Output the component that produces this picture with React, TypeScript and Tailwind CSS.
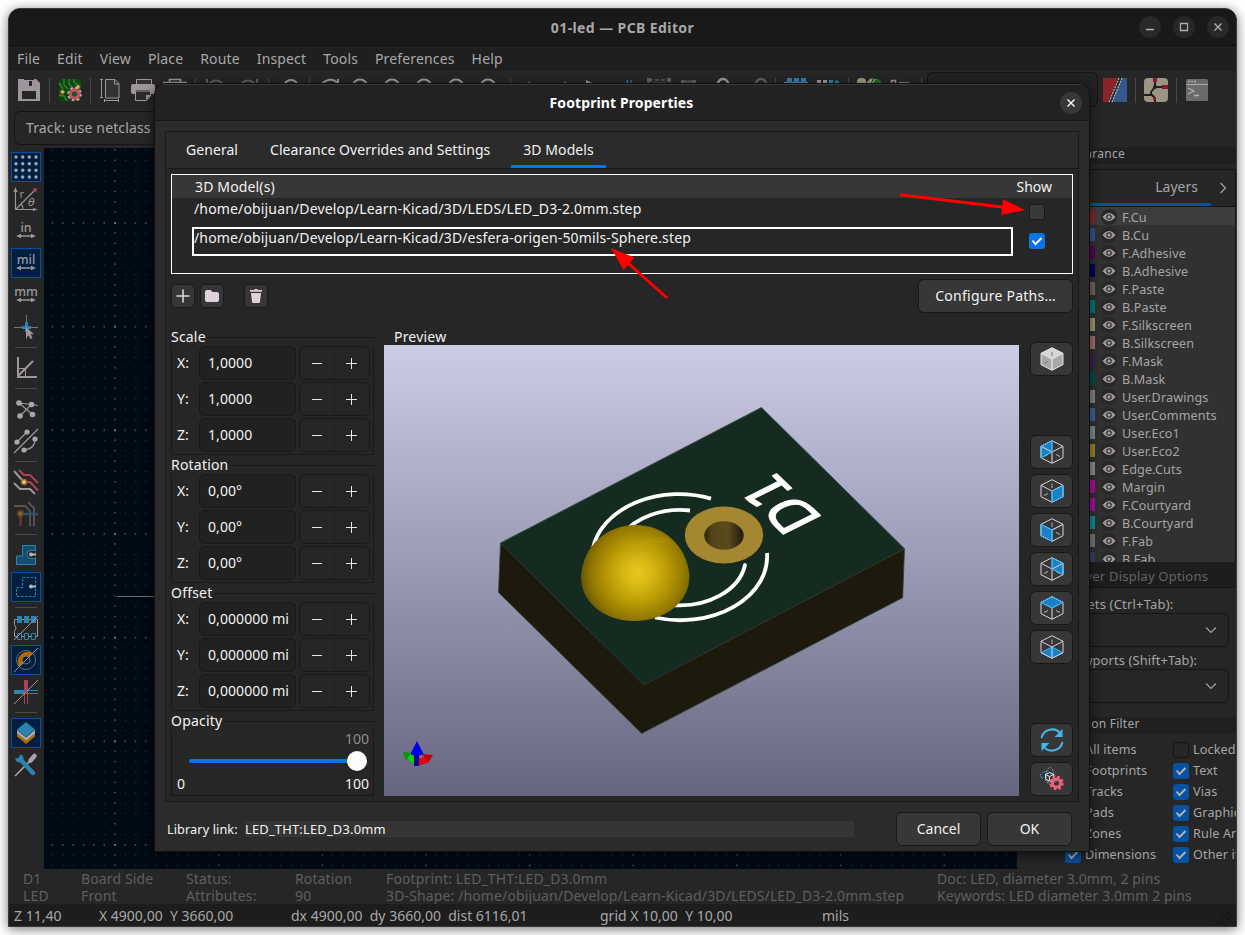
import React from "react";

type Kids = { children?: React.ReactNode };

const Ic = ({ children, dim }: Kids & { dim?: boolean }) => (
  <svg width="24" height="24" viewBox="0 0 24 24" fill="none" className={dim ? "shrink-0 overflow-visible opacity-50" : "shrink-0 overflow-visible"}>
    {children}
  </svg>
);

const G = "#9d969c";
const B = "#2c83ae";
const R = "#ad4157";
const O = "#b06a00";

const TB = ({ children, dim }: Kids & { dim?: boolean }) => (
  <div className="flex h-8 w-8 shrink-0 items-center justify-center">
    <Ic dim={dim}>{children}</Ic>
  </div>
);

const TSep = () => (
  <div className="flex h-8 w-[9px] shrink-0 items-center justify-center">
    <div className="h-[25px] w-px bg-[#484848]" />
  </div>
);

const LB = ({ children, on, dim }: Kids & { on?: boolean; dim?: boolean }) => (
  <div className="flex h-8 w-full shrink-0 items-center justify-center">
    <div
      className={
        on
          ? "flex h-[30px] w-[30px] items-center justify-center border border-[#0552a3] bg-[#001f40]"
          : "flex h-[30px] w-[30px] items-center justify-center"
      }
    >
      <Ic dim={dim}>{children}</Ic>
    </div>
  </div>
);

const LSep = () => (
  <div className="flex h-[9px] w-full shrink-0 items-center justify-center">
    <div className="h-px w-[22px] bg-[#4a4a4a]" />
  </div>
);

const Unit = ({ t }: { t: string }) => (
  <>
    <text x="12" y="12.500" textAnchor="middle" fontSize="12.500" fontFamily="Noto Sans, sans-serif" fontWeight="500" fill={G}>
      {t}
    </text>
    <path d="M4 17h16" stroke={G} strokeWidth="1.500" />
    <path d="M2 17l5-2.200v4.400zM22 17l-5-2.200v4.400z" fill={G} />
  </>
);

function TopToolbar() {
  return (
    <div className="flex h-[38px] shrink-0 items-center pl-1">
      <TB>
        <path fillRule="evenodd" fill={G} d="M1 1h18l4 4v18H1zM7 1v8h10V1zM5 13v8h14v-8z" />
        <path d="M7 2h10v7H7z" fill={G} />
        <path d="M12 3h3v5h-3z" fill="#262626" />
      </TB>
      <TSep />
      <TB>
        <rect x="1" y="1" width="22" height="22" rx="3" fill="#0a4a0e" />
        <path d="M6 1v6l4 4M11 1v5l4 4M16 1v3l4 3M1 17l5 1 3 5M1 5l4 6" stroke="#3f7a3f" strokeWidth="1.4" />
        <circle cx="4.5" cy="14" r="1.9" fill="#c5b59b" stroke={O} />
        <circle cx="20" cy="9" r="1.9" fill="#c5b59b" stroke={O} />
        <circle cx="20" cy="21" r="1.7" fill={O} />
        <circle cx="16.5" cy="16" r="4.2" stroke="#bd5266" strokeWidth="3.4" />
        <circle cx="16.5" cy="16" r="6.4" stroke="#c9a0a8" strokeWidth="1.8" strokeDasharray="2.6 2.4" />
        <circle cx="16.5" cy="16" r="2" fill="#1d5a22" />
      </TB>
      <TSep />
      <TB>
        <path d="M6.500 1.500h9.500l4 4v14.500H6.500z" stroke={G} fill="#333" />
        <path d="M15.500 1.500v4.500h4.500" stroke={G} />
        <path d="M2.500 1v19M1 1.500h3M1 19.500h3M5 22.500h15M5.500 21v3M19.500 21v3" stroke={G} />
      </TB>
      <TB>
        <path d="M5.500 6V1.500h15V6" stroke={G} fill="#333" />
        <path d="M2 6h20q2 0 2 2v6q0 2-2 2h-2l-2-4H5v4H2q-2 0-2-2V8q0-2 2-2z" fill={G} />
        <path d="M4.500 13h15v5l-4 4.500h-11z" stroke={G} fill="#2c2c2c" />
        <path d="M15 17h5l-5 5z" fill={G} />
      </TB>
      <TB>
        <path d="M0 4.500h24M6.500 4V1.500h11V4" stroke={G} strokeWidth="1.6" />
      </TB>
      <TSep />
      <TB dim>
        <path d="M3 1v8h7M4 7q5-6 11-4q5 2 5 8" stroke={G} strokeWidth="2" />
      </TB>
      <TB dim>
        <path d="M21 1v8h-7M20 7q-5-6-11-4q-5 2-5 8" stroke={G} strokeWidth="2" />
      </TB>
      <TSep />
      <TB>
        <circle cx="14" cy="9" r="7" stroke={G} strokeWidth="2" />
      </TB>
      <TSep />
      <TB>
        <path d="M3 9a9.500 9.500 0 0 1 17-3V1" stroke={G} strokeWidth="2" />
      </TB>
      {[0, 1, 2, 3, 4].map((i) => (
        <TB key={i}>
          <circle cx="10" cy="9" r="7.500" stroke={G} strokeWidth="2" />
        </TB>
      ))}
      <TSep />
      <TB>
        <path d="M7 6l4-3v4z" fill={B} />
      </TB>
      <TB>
        <path d="M17 6l-4-3v4z" fill={B} />
      </TB>
      <TB>
        <path d="M3 2l12 6H3z" fill={G} />
      </TB>
      <TB>
        <path d="M11.500 6l1-4v8zM16 2v8" fill={B} stroke={B} />
      </TB>
      <TB dim>
        <path d="M2 2h20v16H2z" stroke={G} strokeDasharray="4 2" strokeWidth="1.500" />
        <path d="M0 0h4v4H0zM20 0h4v4h-4z" fill={G} />
        <path d="M6 5h12v8H6z" stroke={G} />
      </TB>
      <TB dim>
        <path d="M4 3.500h12" stroke={G} strokeWidth="2" />
        <path d="M2 2h4v4H2zM13 2h4v4h-4z" fill={G} />
      </TB>
      <TB>
        <path d="M7 12V6a5 5 0 0 1 10 0v6" stroke={G} strokeWidth="2.400" />
      </TB>
      <TB dim>
        <path d="M13 12V6a5 5 0 0 1 10 0v3" stroke={G} strokeWidth="2.400" />
      </TB>
      <TSep />
      <TB>
        <path d="M0.500 4.500h23v14H.5z" stroke={G} />
        <path d="M3 0h5v7H3zM10 0h5v7h-5zM17 0h5v7h-5z" fill={B} />
      </TB>
      <TB>
        <path d="M1 2h4v4H1zM7 2h4v4H7z" fill={G} />
        <path d="M13 2h4v4h-4zM20 2q4 1 3 4h-5z" fill={B} />
      </TB>
      <TSep />
      <TB>
        <path d="M0 8V3q0-3 5-3t4 6zM9 6q3-6 7-6l-3 8z" fill="#a09983" />
        <path d="M16 1q8-2 9 6h-9z" fill="#1e6a22" />
        <path d="M14 7l4-6" stroke="#c8c8c8" />
      </TB>
      <TB>
        <path d="M2.500 2.500h4v6h-4zM10 5h10" stroke={G} strokeWidth="1.500" />
      </TB>
      <TSep />
      <div className="mt-[-1px] ml-px h-[35px] w-[171px] shrink-0 rounded-md border border-[#141414] bg-[#222]" />
      <div className="w-px shrink-0" />
      <TB>
        <path d="M0 0h15L5 24H0z" fill="#8c2427" />
        <path d="M19 0h5v24H9z" fill="#34588f" />
        <path d="M16 0L6 24M19 0L9 24" stroke="#b9b9b9" strokeWidth="1.200" strokeDasharray="2 1" />
      </TB>
      <TSep />
      <TB>
        <rect width="24" height="24" rx="4" fill="#9a9482" />
        <path d="M11 4v5l7 0M11 9l-4 5v3H0M7 16l4 4v4" stroke="#1f1f1f" strokeWidth="2" />
        <circle cx="11" cy="9" r="2" fill="#1f1f1f" />
        <path d="M9 0h4v4H9zM18 7h6v4h-6zM9 19h3v3H9z" fill="#8c1530" />
      </TB>
      <TSep />
      <TB>
        <rect x="1" y="1" width="22" height="22" rx="1.500" fill="#6b6b6b" />
        <path d="M1 6.500h22" stroke="#aaa" />
        <path d="M3 3.500h9" stroke="#aaa" strokeDasharray="2 1" strokeWidth="1.500" />
        <path d="M3 10l6 3-6 3M9 17.500h5" stroke="#b2b2b2" strokeWidth="1.300" />
      </TB>
    </div>
  );
}

function LeftToolbar() {
  const dots = [2, 8.700, 15.300, 22];
  return (
    <div className="flex w-[35px] shrink-0 flex-col pt-[4px] pr-px">
      <LB on>
        {dots.map((x) => dots.map((y) => <circle key={x + "-" + y} cx={x} cy={y} r="1.700" fill="#a7a3a9" />))}
      </LB>
      <LB>
        <path d="M1.500 4v18.500H21M2 22L20 4M7 17q2 2 2 5" stroke={G} strokeWidth="1.100" />
        <path d="M1.500 0l2 5h-4zM24 22.500l-5-1.500v3z" fill={G} />
        <circle cx="21" cy="3" r="2" fill={R} />
        <text x="5.500" y="11" fontSize="11" fontFamily="Noto Sans, sans-serif" fill={G}>r</text>
        <text x="14" y="19" fontSize="11" fontStyle="italic" fontFamily="DejaVu Sans, sans-serif" fill={G}>θ</text>
      </LB>
      <LB><Unit t="in" /></LB>
      <LB on><Unit t="mil" /></LB>
      <LB><Unit t="mm" /></LB>
      <LB>
        <path d="M12.500 0v24M0 12.500h24" stroke="#777" />
        <path d="M12.500 7v10M8 12.500h9" stroke={B} strokeWidth="3" />
        <path d="M12 12v11l2.500-2.500L16.500 24l2-1-1.800-3.700H20z" fill={G} />
      </LB>
      <LSep />
      <LB>
        <path d="M4 1v20H23M4 20L19 5" stroke={G} strokeWidth="2" />
        <path d="M4 12.500h7.500v8" stroke={G} />
      </LB>
      <LSep />
      <LB>
        <path d="M5 6l13 1.500 6 1M5 6l14 12M18 7L6 19" stroke={G} strokeWidth="1.200" />
        <g fill="#aaa6ab">
          <circle cx="5" cy="6" r="2.800" /><circle cx="17.500" cy="7.500" r="2.800" />
          <circle cx="6" cy="19" r="2.800" /><circle cx="18.500" cy="17.500" r="2.800" />
        </g>
      </LB>
      <LB>
        <path d="M0 24L24 0M3 13L13 3M21 10q0 10-11 11" stroke={G} strokeWidth="1.200" />
        <g fill="#aaa6ab">
          <circle cx="3" cy="13" r="2.600" /><circle cx="13" cy="3" r="2.600" />
          <circle cx="21" cy="10" r="2.600" /><circle cx="10" cy="21" r="2.600" />
        </g>
      </LB>
      <LSep />
      <LB>
        <path d="M0 1l9 10M0 13l6 6h10l5 5" stroke={G} strokeWidth="2" />
        <path d="M5 0l5 5h6l8 8M10 12h6l8 8.500" stroke={R} strokeWidth="2" />
        <circle cx="10" cy="12" r="2.500" fill="#d9d5d0" stroke={O} strokeWidth="1.700" />
      </LB>
      <LB dim>
        <path d="M0 4h11l5 5v15M14 0l6 6v18" stroke="#888" strokeWidth="1.800" />
        <path d="M8 12h16" stroke={B} strokeWidth="2.400" /><path d="M6.500 12v12" stroke={R} strokeWidth="2.400" />
        <circle cx="6.500" cy="11.500" r="2.500" fill="#ccc" stroke={O} strokeWidth="2" />
      </LB>
      <LSep />
      <LB>
        <path d="M8.500 2.500h13v19h-19v-8.500h6z" fill="#144f72" stroke={B} />
        <path d="M21.500 7.500h-4.500a4 4 0 0 0 0 8h4.500" fill="#222" stroke={B} />
        <path d="M16 11.500h6" stroke="#bcb6bb" strokeWidth="2" /><circle cx="17" cy="11.500" r="2" fill="#bcb6bb" />
      </LB>
      <LB on>
        <path d="M8.500 2.500h13v19h-19v-9h6z" stroke={B} strokeWidth="1.200" strokeDasharray="2.500 1.500" />
        <path d="M16 11.500h6" stroke="#bcb6bb" strokeWidth="2" /><circle cx="17" cy="11.500" r="2" fill="#bcb6bb" />
      </LB>
      <LSep />
      <LB>
        <path d="M.5 3.500h23v17H.5v-5q3-3.500 0-7z" stroke={G} />
        <path d="M3 0h5v7H3zM10 0h5v7h-5zM17 0h5v7h-5z" fill={B} />
        <path d="M3.500 17.500h4v6h-4zM10.500 17.500h4v6h-4zM17.500 17.500h4v6h-4z" stroke={B} fill="#262626" />
        <path d="M0 24L24 0" stroke={G} />
      </LB>
      <LB on>
        <circle cx="12" cy="12" r="9.500" stroke="#62666d" /><circle cx="12" cy="12" r="4" stroke="#62666d" />
        <path d="M5.500 18.500A9.500 9.500 0 0 1 18.500 5.500L15 9a4 4 0 0 0-6 6z" fill={O} stroke={O} />
        <path d="M0 24L24 0" stroke={G} />
      </LB>
      <LB>
        <path d="M0 12h12" stroke={B} strokeWidth="4" /><path d="M12 10.500h12M12 13.500h12" stroke={B} />
        <path d="M12 0v12" stroke={R} strokeWidth="4" /><path d="M10.500 12v12M13.500 12v12" stroke={R} />
        <path d="M0 24L24 0" stroke={G} />
      </LB>
      <LSep />
      <LB on>
        <path d="M3 12.500l9 6.500 9-6.500v3l-9 7.500-9-7.500z" fill={O} />
        <path d="M3 9l9 7.500L21 9v3.500L12 19.500l-9-7z" fill="#b1a9b0" />
        <path d="M12 1l9 7.500-9 7.500-9-7.500z" fill={B} />
      </LB>
      <LB>
        <path d="M1 23L16 8" stroke="#aaa4aa" strokeWidth="1.600" />
        <path d="M16.500 7.500l4-4.500" stroke="#aaa4aa" strokeWidth="4.500" strokeLinecap="round" />
        <path d="M6 6l13 14" stroke={B} strokeWidth="4.400" strokeLinecap="round" />
        <circle cx="5.500" cy="5.500" r="4" fill={B} /><path d="M1 0h3.500l1.500 3-2.500 2.500L0 4z" fill="#262626" />
      </LB>
    </div>
  );
}

const Check = ({ on, bright }: { on?: boolean; bright?: boolean }) =>
  on ? (
    <div className={bright ? "flex h-4 w-4 shrink-0 items-center justify-center rounded-[3px] bg-[#0a74e6]" : "flex h-4 w-4 shrink-0 items-center justify-center rounded-[3px] bg-[#0551a2]"}>
      <svg width="16" height="16" viewBox="0 0 16 16" fill="none">
        <path d="M3.500 7.500l3 3.500 6-6" stroke={bright ? "#fff" : "#b3b3b3"} strokeWidth="1.900" />
      </svg>
    </div>
  ) : (
    <div className={bright ? "h-4 w-4 shrink-0 rounded-[3px] border border-[#191919] bg-[#383838]" : "h-4 w-4 shrink-0 rounded-[3px] border border-[#141414] bg-[#272727]"} />
  );

const LAYERS: [string, string][] = [
  ["F.Cu", "#8c2427"], ["B.Cu", "#34588f"], ["F.Adhesive", "#590059"], ["B.Adhesive", "#000059"],
  ["F.Paste", "#76665f"], ["B.Paste", "#007a7a"], ["F.Silkscreen", "#a09b68"], ["B.Silkscreen", "#a0746e"],
  ["F.Mask", "#3f2152"], ["B.Mask", "#004f4b"], ["User.Drawings", "#878787"], ["User.Comments", "#3e649b"],
  ["User.Eco1", "#769688"], ["User.Eco2", "#96882f"], ["Edge.Cuts", "#919190"], ["Margin", "#ad109e"],
  ["F.Courtyard", "#ad109e"], ["B.Courtyard", "#108f9c"], ["F.Fab", "#787878"], ["B.Fab", "#3c4061"],
];

const Chevron = () => (
  <svg width="12" height="12" viewBox="0 0 12 12" fill="none">
    <path d="M1 3.500l5 5 5-5" stroke="#a2a2a2" strokeWidth="1.200" />
  </svg>
);

const FILTER: [string, string][] = [
  ["All items", "Locked items"], ["Footprints", "Text"], ["Tracks", "Vias"],
  ["Pads", "Graphics"], ["Zones", "Rule Areas"], ["Dimensions", "Other items"],
];

function RightPanel() {
  return (
    <div className="flex w-[219px] shrink-0 flex-col overflow-hidden text-[12.600px] leading-[18px] tracking-[0.130px] text-[#a5a5a5]">
      <div className="h-[17px] bg-[#202020] pl-[38px] text-[12px] leading-[14px] tracking-[0.270px]">Appearance</div>
      <div className="mt-[5px] flex h-[38px] items-center justify-end border border-[#141414] bg-[#262626] pr-[12px] text-sm tracking-normal">
        <div className="flex h-full items-center border-b-[3px] border-[#0551a2] pr-[13px] pl-[80px] text-[#a5a5a5]">Layers</div>
        <div className="flex h-full w-3 items-center">
          <svg width="8" height="12" viewBox="0 0 8 12" fill="none" className="ml-2 shrink-0">
            <path d="M1.500 1l5 5-5 5" stroke="#a2a2a2" strokeWidth="1.300" />
          </svg>
        </div>
      </div>
      <div className="h-[355px] shrink-0 overflow-hidden border-r border-[#141414] bg-[#313131]">
        {LAYERS.map(([n, c], i) => (
          <div key={n} className={i === 0 ? "flex h-[18px] items-center bg-[#3d3d3d] pl-[62px]" : "flex h-[18px] items-center pl-[62px]"}>
            <div className="h-[13px] w-4 shrink-0" style={{ backgroundColor: c }} />
            <div className="mt-[2px] ml-[6px] flex h-4 w-4 shrink-0 items-center justify-center rounded-full bg-[#282828]">
              <svg width="14" height="10" viewBox="0 0 14 10" fill="none">
                <path fillRule="evenodd" d="M0.500 5Q7-3 13.500 5Q7 13 .5 5zM7 2.200a2.800 2.800 0 1 0 .01 0z" fill="#9f989e" />
                <circle cx="7" cy="5" r="1.700" fill="#9f989e" />
              </svg>
            </div>
            <div className="ml-[5px] pt-[3px]">{n}</div>
          </div>
        ))}
      </div>
      <div className="h-[26px] shrink-0 border-b border-[#141414] bg-[#1d1d1d] pl-[54px] text-[13px] leading-[29px] tracking-[0.200px] text-[#646464]">Layer Display Options</div>
      <div className="mt-[7px] pl-[43px] text-[13px] tracking-[0.180px]">Presets (Ctrl+Tab):</div>
      <div className="mr-[7px] flex h-[34px] shrink-0 items-center justify-end rounded-md border border-[#151515] pr-[11px]"><Chevron /></div>
      <div className="mt-[4px] pl-[47px] text-[12.800px] tracking-[0.150px]">Viewports (Shift+Tab):</div>
      <div className="mr-[7px] flex h-[34px] shrink-0 items-center justify-end rounded-md border border-[#151515] pr-[11px]"><Chevron /></div>
      <div className="mt-[14px] h-[17px] shrink-0 bg-[#202020] pl-[36px] text-[12px] leading-[14px] tracking-[0.250px]">Selection Filter</div>
      <div className="mt-[5px] flex flex-col">
        {FILTER.map(([a, b], i) => (
          <div key={a} className="flex h-[21px] shrink-0 items-center whitespace-nowrap">
            <div className="flex w-[156px] shrink-0 items-center gap-1 pl-[48px]"><Check on />{a}</div>
            <div className="flex shrink-0 items-center gap-1"><Check on={i > 0} />{b}</div>
          </div>
        ))}
      </div>
    </div>
  );
}

function BoardCanvas() {
  return (
    <svg className="mt-px min-w-0 flex-1" height="721" viewBox="44 148 973 721" preserveAspectRatio="xMinYMin slice">
      <defs>
        <pattern id="minor" x="114.500" y="222.200" width="10.367" height="10.367" patternUnits="userSpaceOnUse">
          <rect width="1" height="1" fill="#36404a" />
        </pattern>
        <pattern id="major" x="114" y="222" width="103.670" height="103.670" patternUnits="userSpaceOnUse">
          <rect width="2" height="2" fill="#6c7070" />
          {[1, 2, 3, 4, 5, 6, 7, 8, 9].map((i) => (
            <g key={i} fill="#4a545c">
              <rect x="0" y={i * 10.367} width="2" height="1" />
              <rect x={i * 10.367} y="0" width="1" height="2" />
            </g>
          ))}
        </pattern>
      </defs>
      <rect x="44" y="147" width="973" height="722" fill="#000a14" />
      <rect x="44" y="147" width="973" height="722" fill="url(#minor)" />
      <rect x="44" y="147" width="973" height="722" fill="url(#major)" />
      <path d="M117 596.500h80" stroke="#6b6b68" />
    </svg>
  );
}

const InfoCol = ({ a, b, c }: { a: string; b: string; c: string }) => (
  <div className={c}>
    <div>{a}</div>
    <div>{b}</div>
  </div>
);

const WinBtn = ({ children, bright }: Kids & { bright?: boolean }) => (
  <div className={bright ? "flex h-[22px] w-[22px] items-center justify-center rounded-full bg-[#383838]" : "flex h-[22px] w-[22px] items-center justify-center rounded-full bg-[#282828]"}>
    <svg width="10" height="10" viewBox="0 0 10 10" fill="none" stroke={bright ? "#fff" : "#b0b0b0"} strokeWidth="1.300">
      {children}
    </svg>
  </div>
);

const Spin = ({ axis, value }: { axis: string; value: string }) => (
  <div className="flex h-9 items-center">
    <div className="w-[22px]">{axis}:</div>
    <div className="h-[34px] w-[97px] rounded-md border border-[#191919] bg-[#212121] pl-[8px] leading-[32px] tracking-[0.080px] whitespace-nowrap">{value}</div>
    <div className="ml-[3px] flex h-[34px] w-[71px] rounded-md border border-[#191919]">
      <div className="flex w-[35px] items-center justify-center border-r border-[#1f1f1f]">
        <div className="h-px w-[10px] bg-[#e6e6e6]" />
      </div>
      <div className="flex flex-1 items-center justify-center pr-[2px]">
        <svg width="11" height="11" viewBox="0 0 11 11" stroke="#e6e6e6"><path d="M0 5.500h11M5.500 0v11" /></svg>
      </div>
    </div>
  </div>
);

const GroupTitle = ({ title }: { title: string }) => (
  <div className="flex h-[16px] items-center">
    <div className="pr-[2px] leading-4 tracking-[0.200px]">{title}</div>
    <div className="h-px flex-1 bg-[#191919]" />
  </div>
);

const Group = ({ title, children }: Kids & { title: string }) => (
  <div className="h-[128px] w-[203px] pt-px">
    <GroupTitle title={title} />
    <div className="h-[110px] border border-t-0 border-[#191919] pl-[5px]">{children}</div>
  </div>
);

const CUBE = "M12 .7L23 6.300v11.400L12 23.300 1 17.700V6.300z";

const FACES = [
  "M12 .7L1 6.300v11.400L12 12z",
  "M12 12l11-5.700v11.400L12 23.300z",
  "M1 6.300L12 12v11.300L1 17.700z",
  "M12 .7l11 5.600v11.400L12 12z",
  "M12 .7l11 5.600L12 12 1 6.300z",
  "M12 12l11 5.700-11 5.600-11-5.600z",
];

const ViewBtn = ({ children }: Kids) => (
  <div className="flex h-[34px] w-[43px] shrink-0 items-center justify-center rounded-md border border-[#191919] bg-[#373737]">
    <Ic>{children}</Ic>
  </div>
);

function ViewButtons() {
  return (
    <div className="flex w-[44px] flex-col items-end">
      <div className="h-[14px] shrink-0" />
      <ViewBtn>
        <path d={CUBE} fill="#a9a9a9" />
        <path d={FACES[4]} fill="#d6d6d6" />
        <path d={CUBE} stroke="#e7dce4" />
        <path d="M1 6.300L12 12l11-5.700" stroke="#e7dce4" />
        <path d="M12 12v11" stroke="#dcdcdc" strokeWidth="1.500" />
        <path d="M12 5v4" stroke="#999" strokeWidth="1.500" />
        <path d="M4 16.500l4-2" stroke="#777" />
      </ViewBtn>
      <div className="mt-[59px] flex flex-col gap-[5px]">
        {FACES.map((f, i) => (
          <ViewBtn key={f}>
            <path d="M12 4.500v4.500" stroke="#8d878c" strokeWidth="1.500" />
            <path d="M4 16.500l4-2M16 14.500l4 2" stroke="#bdb5bb" />
            <path d={f} fill="#1a81c8" stroke="#42aee2" />
            <path d="M1 6.300L12 12l11-5.700" stroke={i === 4 || i === 2 ? "#42aee2" : "#ded2da"} />
            {i === 2 && <path d="M12 12l11-5.700" stroke="#ded2da" />}
            <path d="M12 12v11" stroke={i === 5 ? "#8ec7ea" : i === 1 || i === 2 ? "#42aee2" : "#b5adb3"} strokeWidth="1.400" />
            <path d={CUBE} stroke="#ded2da" />
            {i < 5 && <path d={f} stroke="#42aee2" />}
          </ViewBtn>
        ))}
      </div>
      <div className="mt-auto flex flex-col gap-[5px]">
        <ViewBtn>
          <path d="M1.500 10A10.800 10.800 0 0 1 20.500 5.500M22.500 14A10.800 10.800 0 0 1 3.500 18.500" stroke="#42b8eb" strokeWidth="2" />
          <path d="M22.500 1v8h-8zM1.500 23v-8h8z" fill="#42b8eb" />
        </ViewBtn>
        <ViewBtn>
          <ellipse cx="10" cy="9" rx="4" ry="8.500" stroke="#999" strokeDasharray="2 1" />
          <ellipse cx="9" cy="10" rx="9" ry="4.500" stroke="#2c83ae" strokeDasharray="6 2" transform="rotate(20 9 10)" />
          <path d="M9.500 5.500l4 2v4.500l-4 2-4-2V7.500zM5.500 7.500l4 2 4-2M9.500 9.500v4" stroke="#ddd" />
          <circle cx="16.500" cy="16" r="4.100" stroke="#f25f7a" strokeWidth="3" />
          <circle cx="16.500" cy="16" r="6.100" stroke="#f25f7a" strokeWidth="2.200" strokeDasharray="2.600 2.190" />
        </ViewBtn>
      </div>
    </div>
  );
}

function Preview() {
  return (
    <svg width="635" height="451" viewBox="384 345 635 451" className="block shrink-0">
      <defs>
        <linearGradient id="sky" x1="0" y1="0" x2="0" y2="1">
          <stop offset="0" stopColor="#cccce5" />
          <stop offset="1" stopColor="#666681" />
        </linearGradient>
        <radialGradient id="ball" gradientUnits="userSpaceOnUse" cx="638" cy="573" r="60">
          <stop offset="0" stopColor="#e6c71e" />
          <stop offset=".2" stopColor="#dabb15" />
          <stop offset=".5" stopColor="#b99b06" />
          <stop offset=".78" stopColor="#917700" />
          <stop offset="1" stopColor="#5f4e00" />
        </radialGradient>
        <linearGradient id="hole">
          <stop offset="0" stopColor="#2c230e" />
          <stop offset=".2" stopColor="#55451b" />
          <stop offset=".6" stopColor="#5b4a1d" />
          <stop offset="1" stopColor="#1f190c" />
        </linearGradient>
      </defs>
      <rect x="384" y="345" width="635" height="451" fill="url(#sky)" />
      <path d="M500.500 543L644 684.700 904.500 548.700 902.700 597.700 641.700 733.500 498.500 592.500z" fill="#1e190d" stroke="#33443c" strokeWidth=".8" />
      <path d="M761.500 407.500L904.500 548.700 644 684.700 500.500 543z" fill="#162b1f" />
      <path d="M904.500 548.700L761.500 407.500 500.500 543" fill="none" stroke="#35504a" strokeWidth="1" />
      <g fill="none" stroke="#fff" strokeWidth="3.800">
        <path d="M711 498.600A87 63.500 0 0 0 593 548" />
        <path d="M767 553A87 63.500 0 0 1 655 617.500" />
        <path d="M690 510.500A66 47.700 0 0 0 622 535" />
        <path d="M745 565A66 47.700 0 0 1 672 605" strokeLinecap="round" />
      </g>
      <text transform="matrix(-3.6 -3.45 5.1 -2.55 824 519)" fontSize="10" fontFamily="DejaVu Sans, sans-serif" fill="#fff" stroke="#fff" strokeWidth=".22" strokeLinejoin="round">D1</text>
      <ellipse cx="724" cy="535" rx="39.200" ry="28.500" fill="#a58732" />
      <ellipse cx="724" cy="535.500" rx="19.700" ry="14.300" fill="url(#hole)" />
      <path d="M581 577C583 545 607 525 636 525C663 525 687 545 689.500 576C689.500 603 664 621 634 621C604 621 581 602 581 577z" fill="url(#ball)" />
      <path d="M624 551Q642 536 667 537Q672 541 674 546Q655 540 640 545z" fill="#c6a80c" opacity=".2" />
      <path d="M415 765l-10-8-1-5 8 3 5 4z" fill="#00d800" />
      <path d="M403 752l8 1-5 8z" fill="#009600" />
      <path d="M417 766l10-3 3-7-10 2-4 4z" fill="#f00000" />
      <path d="M433 755l-11-1 6 9z" fill="#c00000" />
      <path d="M414 754h5v12h-5z" fill="#000096" />
      <path d="M417 741l6.500 13q-6.500 3-13 0z" fill="#0000e6" />
    </svg>
  );
}

const IconBtn = ({ children }: Kids) => (
  <div className="flex h-6 w-6 items-center justify-center rounded-[5px] border border-[#1b1b1b] bg-[#363636]">
    <svg width="16" height="16" viewBox="0 0 16 16" className="shrink-0" fill="#dfd2dc">{children}</svg>
  </div>
);

function Dialog() {
  return (
    <div className="absolute top-[75px] left-[146px] flex h-[769px] w-[936px] flex-col overflow-hidden rounded-t-xl border border-[#101010] bg-[#2b2b2b] text-[14px] leading-[18px] text-[#f2f2f2] shadow-[0_3px_12px_rgba(0,0,0,0.6)]">
      <div className="flex h-[37px] shrink-0 items-center border-t border-b border-t-[#3a3a3a] border-b-[#191919] bg-[#222] pr-[7px]">
        <div className="flex-1 pl-[28px] text-center text-[14px] font-bold tracking-[0.100px] text-white">Footprint Properties</div>
        <WinBtn bright><path d="M1.500 1.500l7 7M8.500 1.500l-7 7" /></WinBtn>
      </div>
      <div className="mx-[10px] mt-[10px] flex h-[671px] shrink-0 flex-col border border-[#191919] bg-[#262626]">
        <div className="flex h-[37px] shrink-0 border-b border-[#191919] bg-[#2b2b2b] pl-[8px] leading-[36px] tracking-[0.060px]">
          <div className="w-[84px] pl-[12px]">General</div>
          <div className="w-[253px] pl-[12px] whitespace-nowrap">Clearance Overrides and Settings</div>
          <div className="w-[95px] border-b-[3px] border-[#0a74e6] text-center">3D Models</div>
        </div>
        <div className="mx-[5px] mt-[5px] h-[100px] shrink-0 border border-white tracking-[0.150px]">
          <div className="flex h-[23px] items-center justify-between bg-[#373737] pr-[20px] pl-[23px]">
            <div>3D Model(s)</div>
            <div className="tracking-normal">Show</div>
          </div>
          <div className="flex h-[30px] justify-between pr-[27px] pl-[22px]">
            <div className="pt-[2px]">/home/obijuan/Develop/Learn-Kicad/3D/LEDS/LED_D3-2.0mm.step</div>
            <div className="pt-[6px]"><Check bright /></div>
          </div>
          <div className="flex h-[29px] justify-between pr-[27px] pl-[20px]">
            <div className="mt-[-1px] h-[29px] w-[821px] border-2 border-white leading-[18px]">/home/obijuan/Develop/Learn-Kicad/3D/esfera-origen-50mils-Sphere.step</div>
            <div className="pt-[5px]"><Check on bright /></div>
          </div>
        </div>
        <div className="mx-[5px] mt-[4px] flex h-[36px] shrink-0 items-center">
          <IconBtn><path d="M7.200 1.500h1.600v5.700h5.700v1.600H8.800v5.700H7.200V8.800H1.500V7.200h5.700z" /></IconBtn>
          <div className="w-[5px]" />
          <IconBtn><path d="M1 4q0-2 2-2h3.500l2 2H13q2 0 2 2v6q0 2-2 2H3q-2 0-2-2z" /></IconBtn>
          <div className="w-[20px]" />
          <IconBtn><path d="M2 2h4l1-1h2l1 1h4v1.700H2zM3 5h10l-1 9q0 1-1 1H5q-1 0-1-1z" /></IconBtn>
          <div className="ml-auto h-[34px] w-[155px] rounded-md border border-[#191919] bg-[#373737] text-center leading-[32px] tracking-[0.250px]">Configure Paths…</div>
        </div>
        <div className="mx-[5px] mt-[14px] flex h-[468px] shrink-0">
          <div className="flex w-[203px] flex-col">
            <Group title="Scale">
              <Spin axis="X" value="1,0000" /><Spin axis="Y" value="1,0000" /><Spin axis="Z" value="1,0000" />
            </Group>
            <Group title="Rotation">
              <Spin axis="X" value="0,00°" /><Spin axis="Y" value="0,00°" /><Spin axis="Z" value="0,00°" />
            </Group>
            <Group title="Offset">
              <Spin axis="X" value="0,000000 mi" /><Spin axis="Y" value="0,000000 mi" /><Spin axis="Z" value="0,000000 mi" />
            </Group>
            <div className="h-[84px] pt-px">
              <GroupTitle title="Opacity" />
              <div className="h-[67px] border border-t-0 border-[#191919] pr-[4px] pl-[5px]">
                <div className="h-[22px] text-right leading-[20px] text-[#8c8c8c]">100</div>
                <div className="flex h-[20px] items-center pr-[2px] pl-[12px]">
                  <div className="h-[4px] flex-1 rounded-l-full bg-[#0a74e6]" />
                  <div className="ml-[-2px] h-5 w-5 rounded-full bg-[#fcfcfc]" />
                </div>
                <div className="flex justify-between pt-[4px]"><div>0</div><div>100</div></div>
              </div>
            </div>
          </div>
          <div className="ml-[10px] flex w-[635px] flex-col">
            <div className="h-[17px] shrink-0 pl-[10px] leading-[18px] tracking-[0.200px]">Preview</div>
            <Preview />
          </div>
          <div className="ml-auto flex h-[468px]"><ViewButtons /></div>
        </div>
      </div>
      <div className="flex h-[49px] items-center pt-[5px] pr-[17px] pl-[12px]">
        <div className="w-[78px] text-[12.700px] tracking-[0.100px] whitespace-nowrap">Library link:</div>
        <div className="h-4 w-[609px] bg-[#353535] text-[12.900px] leading-[16px] tracking-[0.200px]">LED_THT:LED_D3.0mm</div>
        <div className="ml-auto h-[34px] w-[85px] rounded-md border border-[#191919] bg-[#373737] text-center leading-[32px]">Cancel</div>
        <div className="ml-[6px] h-[34px] w-[85px] rounded-md border border-[#191919] bg-[#373737] text-center leading-[32px]">OK</div>
      </div>
    </div>
  );
}

const MENU = ["File", "Edit", "View", "Place", "Route", "Inspect", "Tools", "Preferences", "Help"];

export default function App() {
  return (
    <div className="h-[935px] w-[1245px] overflow-hidden bg-white px-2 pt-2 font-['Noto_Sans','Open_Sans',sans-serif] text-[14px] text-[#a8a8a8]">
      <div className="relative h-[919px] w-[1229px] rounded-t-xl shadow-[0_2px_12px_rgba(0,0,0,0.55)]">
        <div className="flex h-[919px] flex-col overflow-hidden rounded-t-xl border border-[#393939] bg-[#262626]">
          <div className="flex h-[37px] shrink-0 items-center border-b border-[#0e0e0e] bg-[#191919] pr-[7px]">
            <div className="flex-1 pl-[97px] text-center text-[14px] font-bold tracking-[0.400px]">01-led — PCB Editor</div>
            <div className="flex gap-3">
              <WinBtn><path d="M1 7.500h8" /></WinBtn>
              <WinBtn><path d="M1.500 1.500h7v7h-7z" /></WinBtn>
              <WinBtn><path d="M1.500 1.500l7 7M8.500 1.500l-7 7" /></WinBtn>
            </div>
          </div>
          <div className="flex h-[25px] shrink-0 items-center gap-[17px] bg-[#1f1f1f] pl-[8px] tracking-[0.150px]">
            {MENU.map((m) => <div key={m}>{m}</div>)}
          </div>
          <TopToolbar />
          <div className="flex h-[38px] shrink-0 px-[5px] pt-[2px]">
            <div className="h-[34px] w-[300px] rounded-md border border-[#141414] pl-[11px] leading-[32px] tracking-[0.130px]">Track: use netclass width</div>
          </div>
          <div className="flex h-[722px] shrink-0">
            <LeftToolbar />
            <BoardCanvas />
            <RightPanel />
          </div>
          <div className="flex h-[35px] shrink-0 pl-[14px] leading-[17px] tracking-[0.130px] whitespace-nowrap text-[#5f5f5f]">
            <InfoCol c="w-[58px] pt-px" a="D1" b="LED" />
            <InfoCol c="w-[105px] pt-px" a="Board Side" b="Front" />
            <InfoCol c="w-[109px] pt-px" a="Status:" b="Attributes:" />
            <InfoCol c="w-[91px] pt-px" a="Rotation" b="90" />
            <InfoCol c="w-[551px] pt-px" a="Footprint: LED_THT:LED_D3.0mm" b="3D-Shape: /home/obijuan/Develop/Learn-Kicad/3D/LEDS/LED_D3-2.0mm.step" />
            <InfoCol c="pt-px tracking-[0.070px]" a="Doc: LED, diameter 3.0mm, 2 pins" b="Keywords: LED diameter 3.0mm 2 pins" />
          </div>
          <div className="flex h-[23px] shrink-0 items-center bg-[#1d1d1d] pl-[5px] whitespace-nowrap">
            <div className="w-[85px]">Z 11,40</div>
            <div className="w-[192px]">X 4900,00&nbsp; Y 3660,00</div>
            <div className="w-[309px]">dx 4900,00&nbsp; dy 3660,00&nbsp; dist 6116,01</div>
            <div className="w-[222px]">grid X 10,00&nbsp; Y 10,00</div>
            <div>mils</div>
            <svg width="18" height="18" viewBox="0 0 18 18" className="mt-1 mr-1 ml-auto" stroke="#101010">
              <path d="M1 17L17 1M6 17L17 6M11 17l6-6" />
            </svg>
          </div>
        </div>
        <Dialog />
        <svg width="180" height="120" viewBox="890 186 180 120" className="absolute top-[178px] left-[882px]">
          <path d="M900 194.700L1006 207.500" stroke="#f00" strokeWidth="3" />
          <path d="M1025 210L1003 199.300 1001.300 215z" fill="#f00" />
        </svg>
        <svg width="80" height="70" viewBox="600 240 80 70" className="absolute top-[232px] left-[592px]">
          <path d="M667 298L624 259.500" stroke="#f00" strokeWidth="3" />
          <path d="M611 248L634.500 257.500 623.500 270z" fill="#f00" />
        </svg>
      </div>
    </div>
  );
}
